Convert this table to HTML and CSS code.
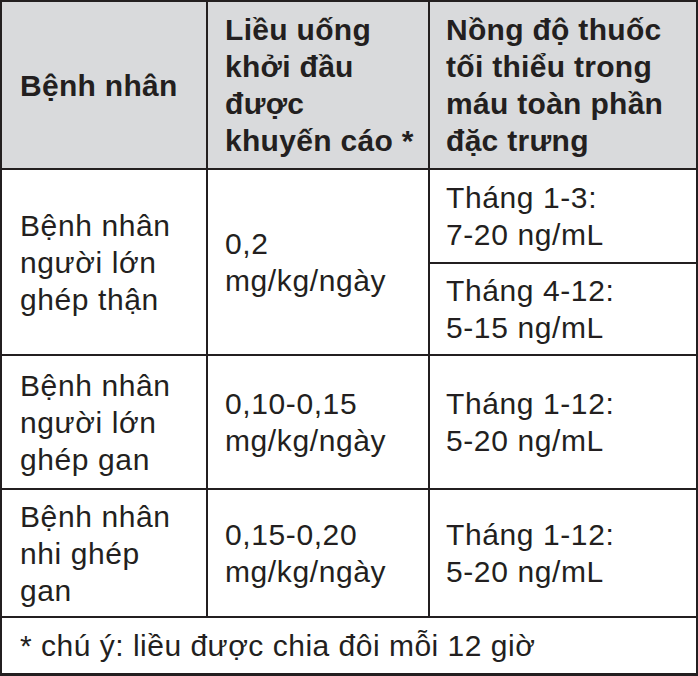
FILE: index.html
```html
<!DOCTYPE html>
<html lang="vi">
<head>
<meta charset="utf-8">
<link rel="stylesheet" href="styles.css">
</head>
<body>
<table class="dose">
  <tr class="r-head">
    <th class="c1">Bệnh nhân</th>
    <th class="c2 top">Liều uống<br>khởi đầu<br>được<br>khuyến cáo *</th>
    <th class="c3 top">Nồng độ thuốc<br>tối thiểu trong<br>máu toàn phần<br>đặc trưng</th>
  </tr>
  <tr class="r-1a">
    <td class="c1" rowspan="2">Bệnh nhân<br>người lớn<br>ghép thận</td>
    <td class="c2" rowspan="2">0,2<br>mg/kg/ngày</td>
    <td class="c3">Tháng 1-3:<br>7-20 ng/mL</td>
  </tr>
  <tr class="r-1b">
    <td class="c3">Tháng 4-12:<br>5-15 ng/mL</td>
  </tr>
  <tr class="r-2">
    <td class="c1">Bệnh nhân<br>người lớn<br>ghép gan</td>
    <td class="c2">0,10-0,15<br>mg/kg/ngày</td>
    <td class="c3">Tháng 1-12:<br>5-20 ng/mL</td>
  </tr>
  <tr class="r-3">
    <td class="c1">Bệnh nhân<br>nhi ghép<br>gan</td>
    <td class="c2">0,15-0,20<br>mg/kg/ngày</td>
    <td class="c3">Tháng 1-12:<br>5-20 ng/mL</td>
  </tr>
  <tr class="r-foot">
    <td class="foot" colspan="3">* chú ý: liều được chia đôi mỗi 12 giờ</td>
  </tr>
</table>
</body>
</html>
```
FILE: styles.css
```css
html, body {
  margin: 0;
  padding: 0;
  background: #ffffff;
}
.dose {
  width: 698px;
  table-layout: fixed;
  border-collapse: separate;
  border-spacing: 0;
  border-top: 2px solid #231f20;
  border-left: 2px solid #231f20;
  font-family: "Liberation Sans", Arial, sans-serif;
  color: #231f20;
  font-size: 30px;
  line-height: 37px;
}
.dose th, .dose td {
  box-sizing: border-box;
  border-right: 2px solid #231f20;
  border-bottom: 2px solid #231f20;
  padding: 0 10px 0 17px;
  vertical-align: middle;
  text-align: left;
  letter-spacing: 0.6px;
  white-space: nowrap;
  overflow: hidden;
}
.dose th {
  background: #d9dadc;
  font-weight: bold;
  letter-spacing: 0.3px;
}
.c1 { width: 206px; padding-left: 18px !important; }
.c2 { width: 222px; padding-left: 17px !important; }
.c3 { width: 268px; padding-left: 16px !important; }
.r-head { height: 168px; }
.r-1a { height: 94px; }
.r-1b { height: 92px; }
.r-2 { height: 134px; }
.r-3 { height: 128px; }
.r-foot { height: 58px; }
.r-foot td { border-bottom-width: 3px; padding-left: 18px; letter-spacing: 0.5px; }
```
